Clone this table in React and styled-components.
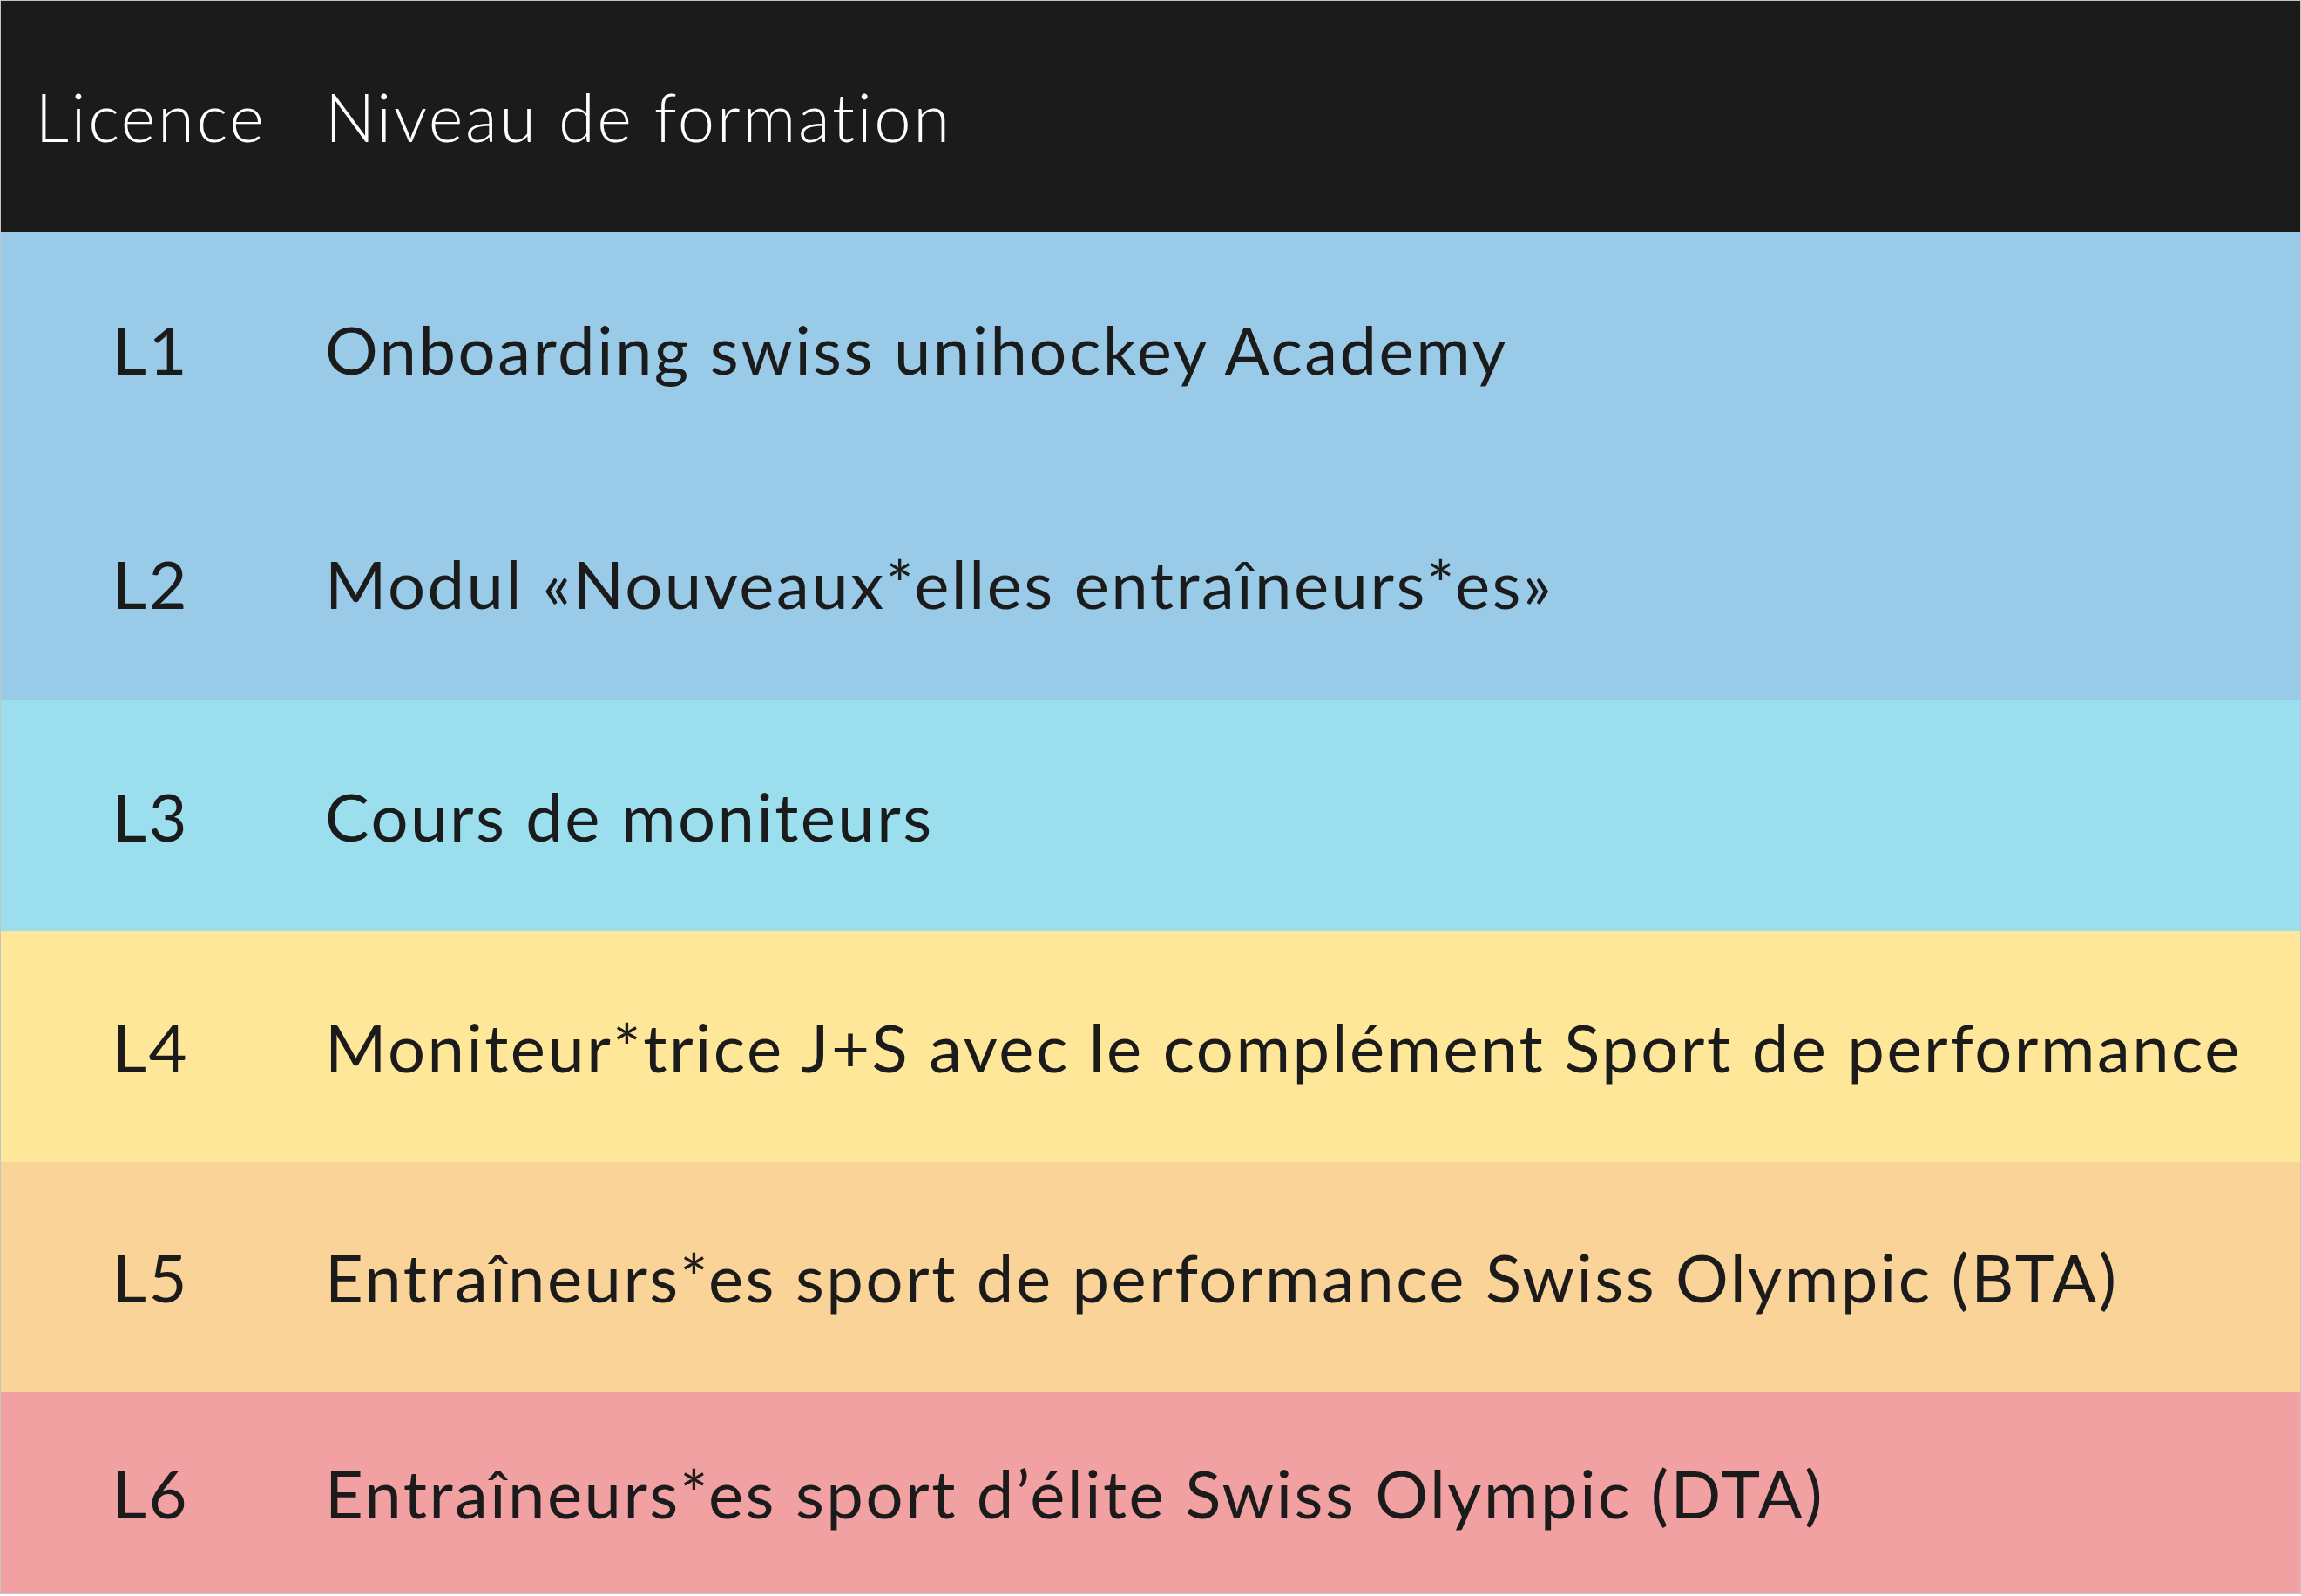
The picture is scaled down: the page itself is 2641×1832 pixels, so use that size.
import React from "react";
import styled, { createGlobalStyle } from "styled-components";

const GlobalStyle = createGlobalStyle`
  html, body {
    margin: 0;
    padding: 0;
    background: #ffffff;
  }
  body {
    font-family: Lato, "Noto Sans", "Liberation Sans", sans-serif;
  }
`;

const Table = styled.table`
  width: 2641px;
  border-collapse: collapse;
  table-layout: fixed;
  border: 1px solid #c4c4c4;
  font-family: Lato, "Noto Sans", "Liberation Sans", sans-serif;
  font-size: 76px;
  font-weight: 400;
  letter-spacing: 2.5px;
  font-variant-ligatures: none;
  color: #1b1b1b;
`;

const HeadRow = styled.tr`
  height: 265px;
  background: #1b1b1b;
`;

const HeadCell = styled.th`
  padding: 0 0 0 ${(p) => (p.$center ? "0" : "27px")};
  text-align: ${(p) => (p.$center ? "center" : "left")};
  vertical-align: middle;
  font-weight: 300;
  letter-spacing: 2.6px;
  color: #ffffff;
  white-space: nowrap;
  border-left: ${(p) => (p.$divider ? "1px solid #5e5e5e" : "none")};
`;

const Row = styled.tr`
  height: ${(p) => p.$h}px;
  background: ${(p) => p.$bg};
`;

const LicenceCell = styled.td`
  padding: 0;
  text-align: center;
  vertical-align: middle;
  white-space: nowrap;
`;

const LevelCell = styled.td`
  padding: 0 0 0 27px;
  text-align: left;
  vertical-align: middle;
  white-space: nowrap;
  border-left: 1px solid rgba(0, 0, 0, 0.025);
`;

const rows = [
  { id: "L1", text: "Onboarding swiss unihockey Academy", bg: "#99cbe8", h: 269 },
  { id: "L2", text: "Modul «Nouveaux*elles entraîneurs*es»", bg: "#99cbe8", h: 269 },
  { id: "L3", text: "Cours de moniteurs", bg: "#9bdfee", h: 265 },
  { id: "L4", text: "Moniteur*trice J+S avec le complément Sport de performance", bg: "#fee799", h: 265 },
  { id: "L5", text: "Entraîneurs*es sport de performance Swiss Olympic (BTA)", bg: "#f9d398", h: 264 },
  { id: "L6", text: "Entraîneurs*es sport d’élite Swiss Olympic (DTA)", bg: "#f2a1a3", h: 232 },
];

export default function App() {
  return (
    <>
      <GlobalStyle />
      <Table>
        <colgroup>
          <col style={{ width: "345px" }} />
          <col />
        </colgroup>
        <thead>
          <HeadRow>
            <HeadCell $center>Licence</HeadCell>
            <HeadCell $divider>Niveau de formation</HeadCell>
          </HeadRow>
        </thead>
        <tbody>
          {rows.map((r) => (
            <Row key={r.id} $bg={r.bg} $h={r.h}>
              <LicenceCell>{r.id}</LicenceCell>
              <LevelCell>{r.text}</LevelCell>
            </Row>
          ))}
        </tbody>
      </Table>
    </>
  );
}
